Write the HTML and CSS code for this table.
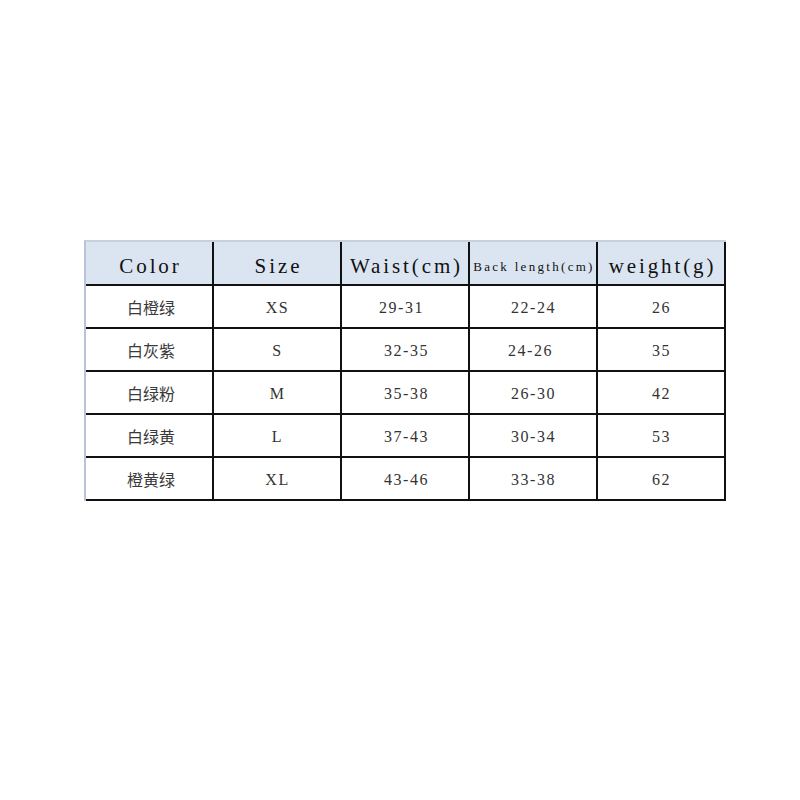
FILE: index.html
```html
<!DOCTYPE html>
<html>
<head>
<meta charset="utf-8">
<link rel="stylesheet" href="styles.css">
</head>
<body>
<div class="sheet">
  <div class="grid">
    <div class="cell head h1">Color</div>
    <div class="cell head h1">Size</div>
    <div class="cell head h1">Waist(cm)</div>
    <div class="cell head h2">Back length(cm)</div>
    <div class="cell head h1">weight(g)</div>

    <div class="cell cn">白橙绿</div>
    <div class="cell num">XS</div>
    <div class="cell num w1">29-31</div>
    <div class="cell num">22-24</div>
    <div class="cell num">26</div>

    <div class="cell cn">白灰紫</div>
    <div class="cell num">S</div>
    <div class="cell num w2">32-35</div>
    <div class="cell num b2">24-26</div>
    <div class="cell num">35</div>

    <div class="cell cn">白绿粉</div>
    <div class="cell num">M</div>
    <div class="cell num w2">35-38</div>
    <div class="cell num">26-30</div>
    <div class="cell num">42</div>

    <div class="cell cn">白绿黄</div>
    <div class="cell num">L</div>
    <div class="cell num w2">37-43</div>
    <div class="cell num">30-34</div>
    <div class="cell num">53</div>

    <div class="cell cn">橙黄绿</div>
    <div class="cell num">XL</div>
    <div class="cell num w2">43-46</div>
    <div class="cell num">33-38</div>
    <div class="cell num">62</div>
  </div>
</div>
</body>
</html>
```

FILE: styles.css
```css
html, body {
  margin: 0;
  padding: 0;
  background: #ffffff;
}

.sheet {
  padding-top: 240px;
  padding-left: 84px;
}

.grid {
  display: grid;
  grid-template-columns: repeat(5, 128px);
  grid-template-rows: 44px repeat(5, 43px);
  width: 640px;
  border-left: 2px solid #b9c5d6;
  border-top: 2px solid #c9d0da;
}

.cell {
  box-sizing: border-box;
  border-right: 2px solid #111111;
  border-bottom: 2px solid #111111;
  display: flex;
  align-items: center;
  justify-content: center;
  white-space: nowrap;
  color: #444444;
}

.head {
  background: #dbe5f1;
  color: #111111;
  font-family: "Liberation Serif", "DejaVu Serif", serif;
  padding-top: 6px;
}

.h1 {
  font-size: 21px;
  letter-spacing: 2.9px;
  padding-left: 3px;
}

.h2 {
  font-size: 13px;
  letter-spacing: 2.3px;
  padding-left: 2px;
  padding-top: 8px;
}

.cn {
  font-family: "Noto Sans CJK SC", sans-serif;
  font-size: 16px;
  padding-left: 4px;
  color: #3a3a3a;
}

.num {
  font-family: "Liberation Serif", "DejaVu Serif", serif;
  font-size: 16px;
  letter-spacing: 1.5px;
  padding-left: 1px;
  padding-top: 2px;
  color: #333333;
}

.w1 {
  padding-right: 8px;
}

.w2 {
  padding-left: 3px;
}

.b2 {
  padding-right: 6px;
}
```
